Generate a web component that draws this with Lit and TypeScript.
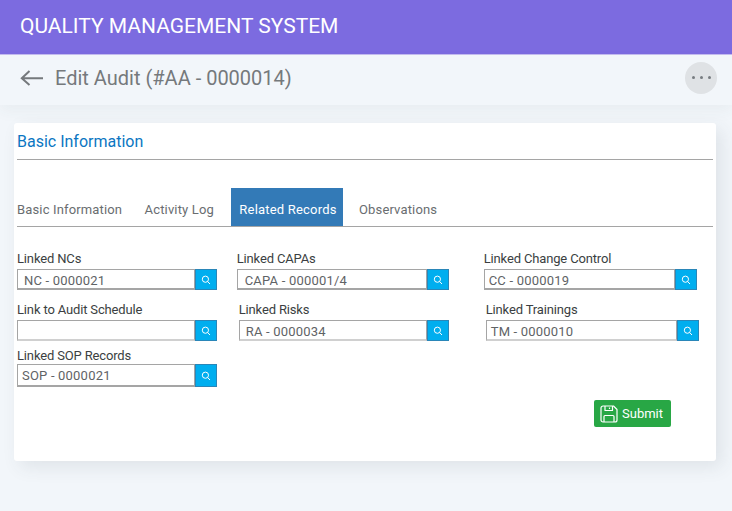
import { LitElement, html, css, svg } from "lit";
import { customElement } from "lit/decorators.js";

type Field = { label: string; value: string; width: number; pad: number };

const rows: { gap: number[]; cls: string; fields: Field[] }[] = [
  {
    gap: [20, 35],
    cls: "r1",
    fields: [
      { label: "Linked NCs", value: "NC - 0000021", width: 199.7, pad: 6 },
      { label: "Linked CAPAs", value: "CAPA - 000001/4", width: 212, pad: 7 },
      { label: "Linked Change Control", value: "CC - 0000019", width: 213, pad: 4 },
    ],
  },
  {
    gap: [22, 37],
    cls: "r2",
    fields: [
      { label: "Link to Audit Schedule", value: "", width: 199.7, pad: 5 },
      { label: "Linked Risks", value: "RA - 0000034", width: 210, pad: 6 },
      { label: "Linked Trainings", value: "TM - 0000010", width: 213, pad: 4 },
    ],
  },
  {
    gap: [],
    cls: "r3",
    fields: [{ label: "Linked SOP Records", value: "SOP - 0000021", width: 199.7, pad: 4 }],
  },
];

const searchIcon = svg`<svg width="10" height="10" viewBox="0 0 10 10" fill="none" stroke="#fff" stroke-width="1"><circle cx="4.4" cy="4.2" r="3.1"/><path d="M6.6 6.5 9 9"/></svg>`;

@customElement("app-root")
export class AppRoot extends LitElement {
  static styles = css`
    :host {
      display: block;
      height: 511px;
      overflow: hidden;
      background: #f2f6fa;
      font-family: Roboto, "Liberation Sans", sans-serif;
    }
    .top {
      height: 52px;
      box-sizing: content-box;
      background: #7c6be0;
      border-bottom: 1px solid #c4bcf0;
      display: flex;
      align-items: center;
      padding: 0 20px 2px 20px;
      color: #fff;
      font-size: 21px;
    }
    .sub {
      height: 50px;
      box-sizing: border-box;
      display: flex;
      align-items: center;
      padding: 0 15px 5px 20px;
      box-shadow: 0 6px 14px rgba(60, 70, 80, 0.05);
      color: #75797c;
      font-size: 20px;
    }
    .back {
      margin-right: 12px;
      display: block;
    }
    .sub .title {
      flex: 1;
    }
    .more {
      width: 32px;
      height: 32px;
      border-radius: 50%;
      background: #dfe2e5;
      display: flex;
      align-items: center;
      justify-content: center;
      gap: 5px;
    }
    .more i {
      width: 3px;
      height: 3px;
      border-radius: 50%;
      background: #777c80;
    }
    .card {
      margin: 18px 16px 0 14px;
      height: 338px;
      box-sizing: border-box;
      background: #fff;
      border-radius: 3px;
      box-shadow: 6px 6px 18px rgba(60, 70, 80, 0.1);
      padding: 0 3px;
    }
    .head {
      height: 37px;
      box-sizing: border-box;
      border-bottom: 1px solid #a5a5a5;
      color: #0b76c2;
      font-size: 16px;
      line-height: 37px;
    }
    .tabs {
      margin-top: 28px;
      height: 38px;
      display: flex;
      border-bottom: 1px solid #a5a5a5;
      font-size: 13px;
      color: #696d70;
    }
    .tab {
      display: flex;
      align-items: center;
      padding-top: 5px;
      box-sizing: border-box;
      letter-spacing: 0.15px;
    }
    .tab.t1 { width: 127.6px; }
    .tab.t2 { width: 86.4px; }
    .tab.on {
      width: 112px;
      background: #337ab7;
      color: #fff;
      justify-content: center;
      margin-right: 16px;
      padding-left: 2px;
      letter-spacing: 0.2px;
    }
    .row {
      display: flex;
    }
    .row.r1 { margin-top: 24px; }
    .row.r2 { margin-top: 12px; }
    .row.r3 { margin-top: 7px; }
    label {
      display: block;
      font-size: 13px;
      line-height: 15px;
      color: #3b3f42;
      margin-bottom: 3px;
      letter-spacing: -0.15px;
    }
    .r3 label { margin-bottom: 1px; }
    .group {
      display: flex;
      height: 21px;
    }
    .r3 .group { height: 23px; }
    .input {
      flex: 1;
      box-sizing: border-box;
      border: 1px solid #a5a5a5;
      border-bottom-width: 2px;
      font-size: 13px;
      line-height: 21px;
      color: #5f6366;
      letter-spacing: 0.2px;
      white-space: nowrap;
      overflow: hidden;
    }
    .r2 .input { border-bottom-color: #d0d0d0; }
    .btn {
      width: 21.5px;
      flex: none;
      box-sizing: border-box;
      background: #00aeef;
      border: 1px solid #2a86b8;
      display: flex;
      align-items: center;
      justify-content: center;
    }
    .actions {
      display: flex;
      justify-content: flex-end;
      margin-top: 13px;
      padding-right: 42px;
    }
    .submit {
      width: 77px;
      height: 27px;
      box-sizing: border-box;
      background: #28a745;
      border-radius: 2px;
      color: #fff;
      font-size: 13px;
      display: flex;
      align-items: center;
      gap: 4px;
      padding-left: 6px;
    }
    .submit svg { display: block; }
  `;

  private field(f: Field) {
    return html`<div style="width:${f.width}px">
      <label>${f.label}</label>
      <div class="group">
        <div class="input" style="padding-left:${f.pad}px">${f.value}</div>
        <div class="btn">${searchIcon}</div>
      </div>
    </div>`;
  }

  render() {
    return html`
      <div class="top">QUALITY MANAGEMENT SYSTEM</div>
      <div class="sub">
        <svg class="back" width="23" height="16" viewBox="0 0 23 16" fill="none" stroke="#75797c" stroke-width="2">
          <path d="M23 8.2H2M9.5 1 1.8 8.2l7.7 6.8" />
        </svg>
        <div class="title">Edit Audit (#AA - 0000014)</div>
        <div class="more"><i></i><i></i><i></i></div>
      </div>
      <div class="card">
        <div class="head">Basic Information</div>
        <div class="tabs">
          <div class="tab t1">Basic Information</div>
          <div class="tab t2">Activity Log</div>
          <div class="tab on">Related Records</div>
          <div class="tab">Observations</div>
        </div>
        ${rows.map(
          (r) => html`<div class="row ${r.cls}">
            ${r.fields.map(
              (f, i) => html`${this.field(f)}${i < r.gap.length
                ? html`<div style="width:${r.gap[i]}px"></div>`
                : ""}`
            )}
          </div>`
        )}
        <div class="actions">
          <div class="submit">
            <svg width="18" height="18" viewBox="0 0 18 18" fill="none" stroke="#fff" stroke-width="1.2" stroke-linejoin="round">
              <path d="M1 3a2 2 0 0 1 2-2h10.5L17 4.5V15a2 2 0 0 1-2 2H3a2 2 0 0 1-2-2z" />
              <path d="M5 1v4.5h7.5V1M9.5 2.5v1.5" />
              <path d="M4 17v-5.5a1 1 0 0 1 1-1h8a1 1 0 0 1 1 1V17" />
            </svg>
            Submit
          </div>
        </div>
      </div>
    `;
  }
}
